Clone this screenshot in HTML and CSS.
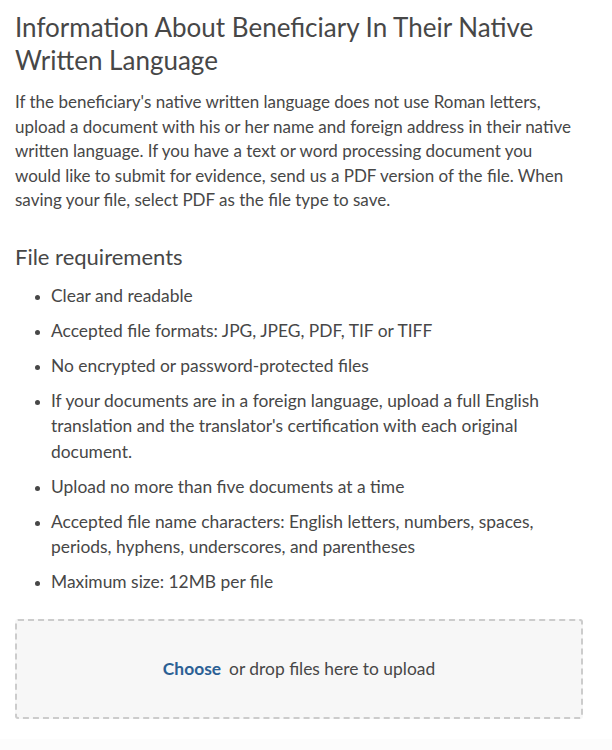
FILE: index.html
```html
<!DOCTYPE html>
<html lang="en">

<head>
    <meta charset="UTF-8">
    <meta name="viewport" content="width=device-width, initial-scale=1.0">
    <title>Beneficiary Native Language Upload</title>
    <link rel="stylesheet" href="styles.css">
</head>

<body>

    <div class="upload-section">
        <h2>Information About Beneficiary In Their Native Written Language</h2>
        <p class="intro">If the beneficiary's native written language does not use Roman letters, upload a document with his or her name and foreign address in their native written language. If you have a text or word processing document you would like to submit for evidence, send us a PDF version of the file. When saving your file, select PDF as the file type to save.</p>

        <h3>File requirements</h3>
        <ul class="requirements">
            <li>Clear and readable</li>
            <li>Accepted file formats: JPG, JPEG, PDF, TIF or TIFF</li>
            <li>No encrypted or password-protected files</li>
            <li>If your documents are in a foreign language, upload a full English translation and the translator's certification with each original document.</li>
            <li>Upload no more than five documents at a time</li>
            <li>Accepted file name characters: English letters, numbers, spaces, periods, hyphens, underscores, and parentheses</li>
            <li>Maximum size: 12MB per file</li>
        </ul>

        <div class="drop-zone">
            <span class="choose">Choose</span>
            <span class="drop-text">or drop files here to upload</span>
        </div>
    </div>

    <div class="page-footer"></div>

</body>

</html>
```

FILE: styles.css
```css
body {
    font-family: 'Lato', 'Open Sans', sans-serif;
    color: #474747;
    background-color: #ffffff;
    margin: 0;
}

.upload-section {
    width: 568px;
    padding: 11px 29px 20px 15px;
}

.upload-section h2 {
    font-size: 26px;
    font-weight: 400;
    line-height: 33px;
    margin: 0 0 13px;
}

.upload-section .intro {
    max-width: 563px;
    font-size: 17px;
    line-height: 24.5px;
    margin: 0 0 30px;
}

.upload-section h3 {
    font-size: 22px;
    font-weight: 400;
    line-height: 28px;
    margin: 0 0 12px;
}

.requirements {
    margin: 0 0 24px;
    padding-left: 36px;
    font-size: 17.4px;
    line-height: 25.5px;
}

.requirements li {
    margin-bottom: 9.5px;
}

.requirements li::marker {
    font-size: 14px;
}

.drop-zone {
    height: 96px;
    background-color: #f7f7f7;
    border: 2px dashed #cccccc;
    border-radius: 3px;
    display: flex;
    justify-content: center;
    align-items: center;
    gap: 8px;
    font-size: 17.4px;
}

.drop-zone .choose {
    color: #2b6094;
    font-weight: bold;
    cursor: pointer;
}

.page-footer {
    background-color: #fcfcfc;
    height: 40px;
}
```
